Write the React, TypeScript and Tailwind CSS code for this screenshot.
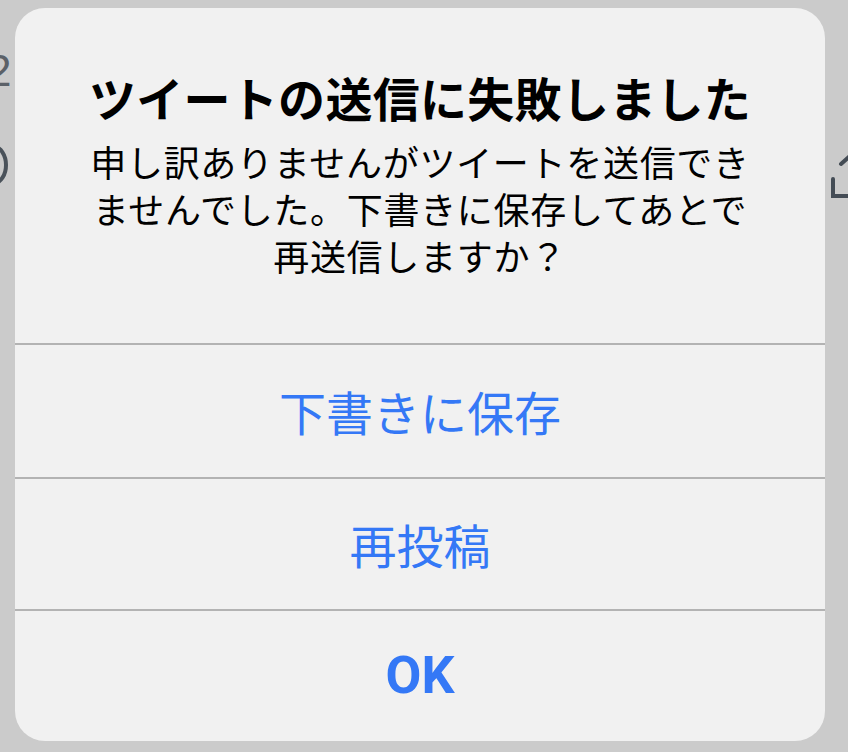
export default function App() {
  return (
    <div
      className="relative h-[752px] w-[848px] overflow-hidden bg-[#cbcbcb]"
      style={{ fontFamily: '"Noto Sans CJK JP", "Noto Sans", sans-serif' }}
    >
      {/* bits of the timeline behind the alert */}
      <div
        className="absolute left-[-13px] top-[49px] text-[44px] leading-none text-[#5b6168]"
        style={{ fontFamily: '"Liberation Sans", sans-serif' }}
      >
        2
      </div>
      <svg className="absolute left-[-22px] top-[140px]" width="32" height="50" viewBox="0 0 32 50">
        <ellipse cx="16" cy="25" rx="12" ry="18" fill="none" stroke="#4a525a" strokeWidth="4" />
      </svg>
      <svg className="absolute left-[828px] top-[150px]" width="30" height="54" viewBox="0 0 30 54">
        <path d="M5 29 V46 H30" fill="none" stroke="#444c55" strokeWidth="4" strokeLinecap="round" />
        <path d="M13 14 L23 5" fill="none" stroke="#444c55" strokeWidth="4" strokeLinecap="round" />
      </svg>

      <div className="relative px-[15px] pt-[8px]">
        <div className="flex h-[733px] w-[810px] flex-col overflow-hidden rounded-[30px] bg-[#f1f1f1]">
          <div className="flex h-[335px] flex-col items-center pt-[61px] text-center text-black">
            <h1 className="text-[47px] font-bold leading-[56px] tracking-[0.3px]">ツイートの送信に失敗しました</h1>
            <p className="mt-[13px] text-[36px] leading-[47px] tracking-[0.7px]">
              申し訳ありませんがツイートを送信でき
              <br />
              ませんでした。下書きに保存してあとで
              <br />
              再送信しますか？
            </p>
          </div>
          <div className="h-[2px] bg-[#b3b3b3]" />
          <button type="button" className="flex h-[132px] items-center justify-center text-[47px] text-[#3478f6]">
            下書きに保存
          </button>
          <div className="h-[2px] bg-[#b3b3b3]" />
          <button type="button" className="flex h-[130px] items-center justify-center text-[47px] text-[#3478f6]">
            再投稿
          </button>
          <div className="h-[2px] bg-[#b3b3b3]" />
          <button
            type="button"
            className="flex flex-1 items-center justify-center text-[52px] font-bold text-[#3478f6]"
            style={{ fontFamily: 'Roboto, "Liberation Sans", sans-serif' }}
          >
            OK
          </button>
        </div>
      </div>
    </div>
  );
}
